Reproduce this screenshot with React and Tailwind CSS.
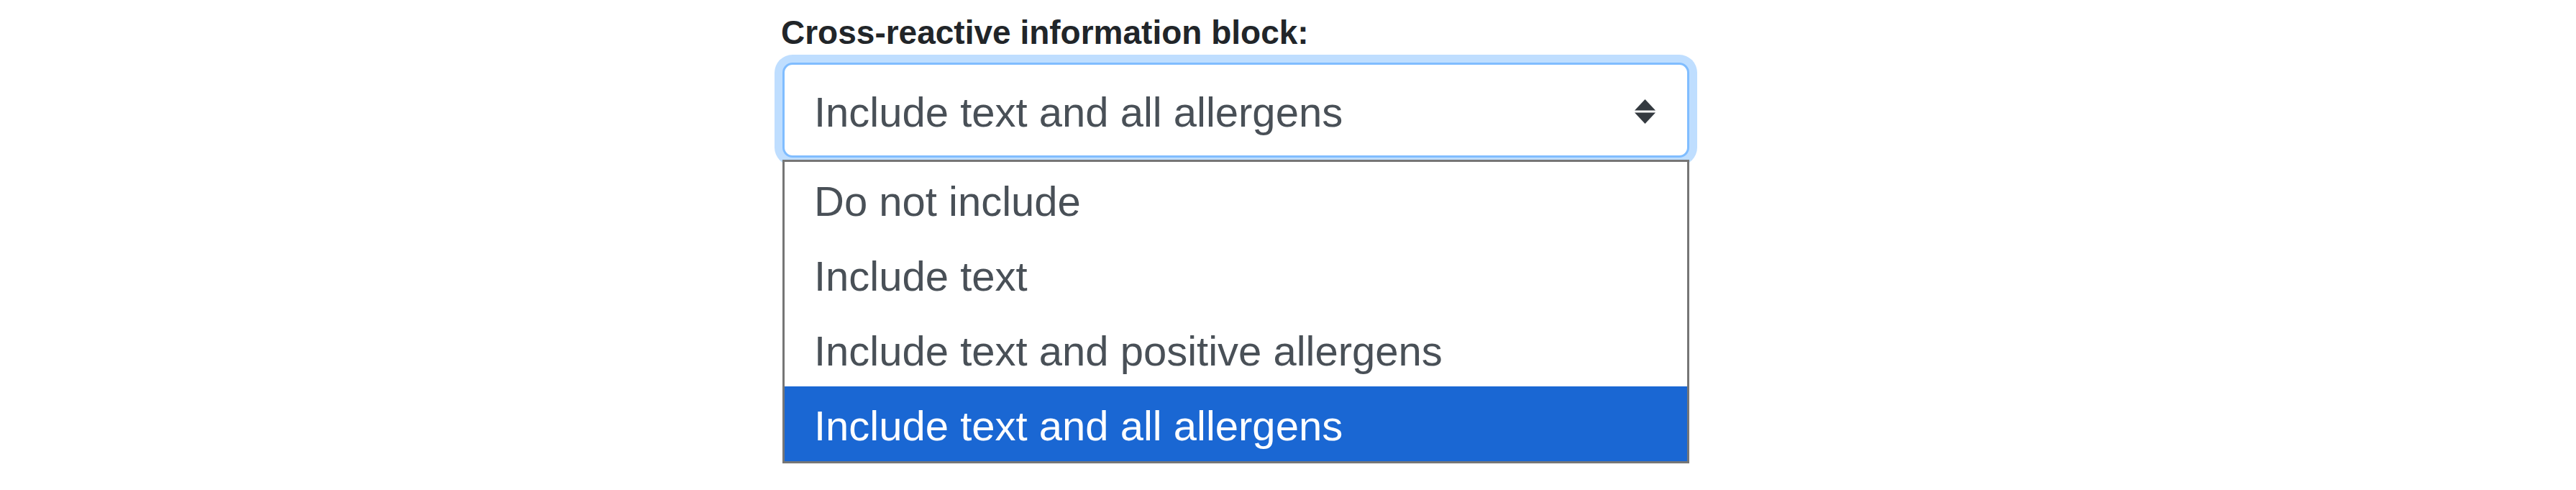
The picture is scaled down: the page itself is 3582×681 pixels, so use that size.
import React from "react";

const options = [
  "Do not include",
  "Include text",
  "Include text and positive allergens",
  "Include text and all allergens",
];

export default function App() {
  return (
    <div className="w-[3582px] h-[681px] bg-white font-['Liberation_Sans',Arial,sans-serif]">
      <div className="pl-[1088px] pt-[22px] w-[2349px] flex flex-col">
        <label className="block text-[46px] leading-[46px] font-bold text-[#212529] -ml-[2px]">
          Cross-reactive information block:
        </label>
        <div className="mt-[19px] h-[132px] w-[1261px] flex items-center justify-between border-[3px] border-[#80bdff] rounded-[14px] bg-white shadow-[0_0_0_11px_#bfdeff] pl-[41px] pr-[44px]">
          <span className="text-[58px] leading-[58px] text-[#495057] pt-[6px]">
            Include text and all allergens
          </span>
          <svg width="29" height="34" viewBox="0 0 29 34" className="mt-[4px]">
            <path d="M14.5 0 L0 15.5 H29 Z" fill="#343a40" />
            <path d="M14.5 34 L0 18.5 H29 Z" fill="#343a40" />
          </svg>
        </div>
        <div className="mt-[3px] w-[1261px] border-[3px] border-[#767676] bg-white flex flex-col">
          {options.map((o, i) => {
            const sel = i === options.length - 1;
            return (
              <div
                key={o}
                className={
                  sel
                    ? "h-[104px] flex items-center pl-[41px] pt-[6px] text-[58px] leading-[58px] bg-[#1a67d3] text-white"
                    : "h-[104px] flex items-center pl-[41px] pt-[6px] text-[58px] leading-[58px] text-[#495057]"
                }
              >
                {o}
              </div>
            );
          })}
        </div>
      </div>
    </div>
  );
}
